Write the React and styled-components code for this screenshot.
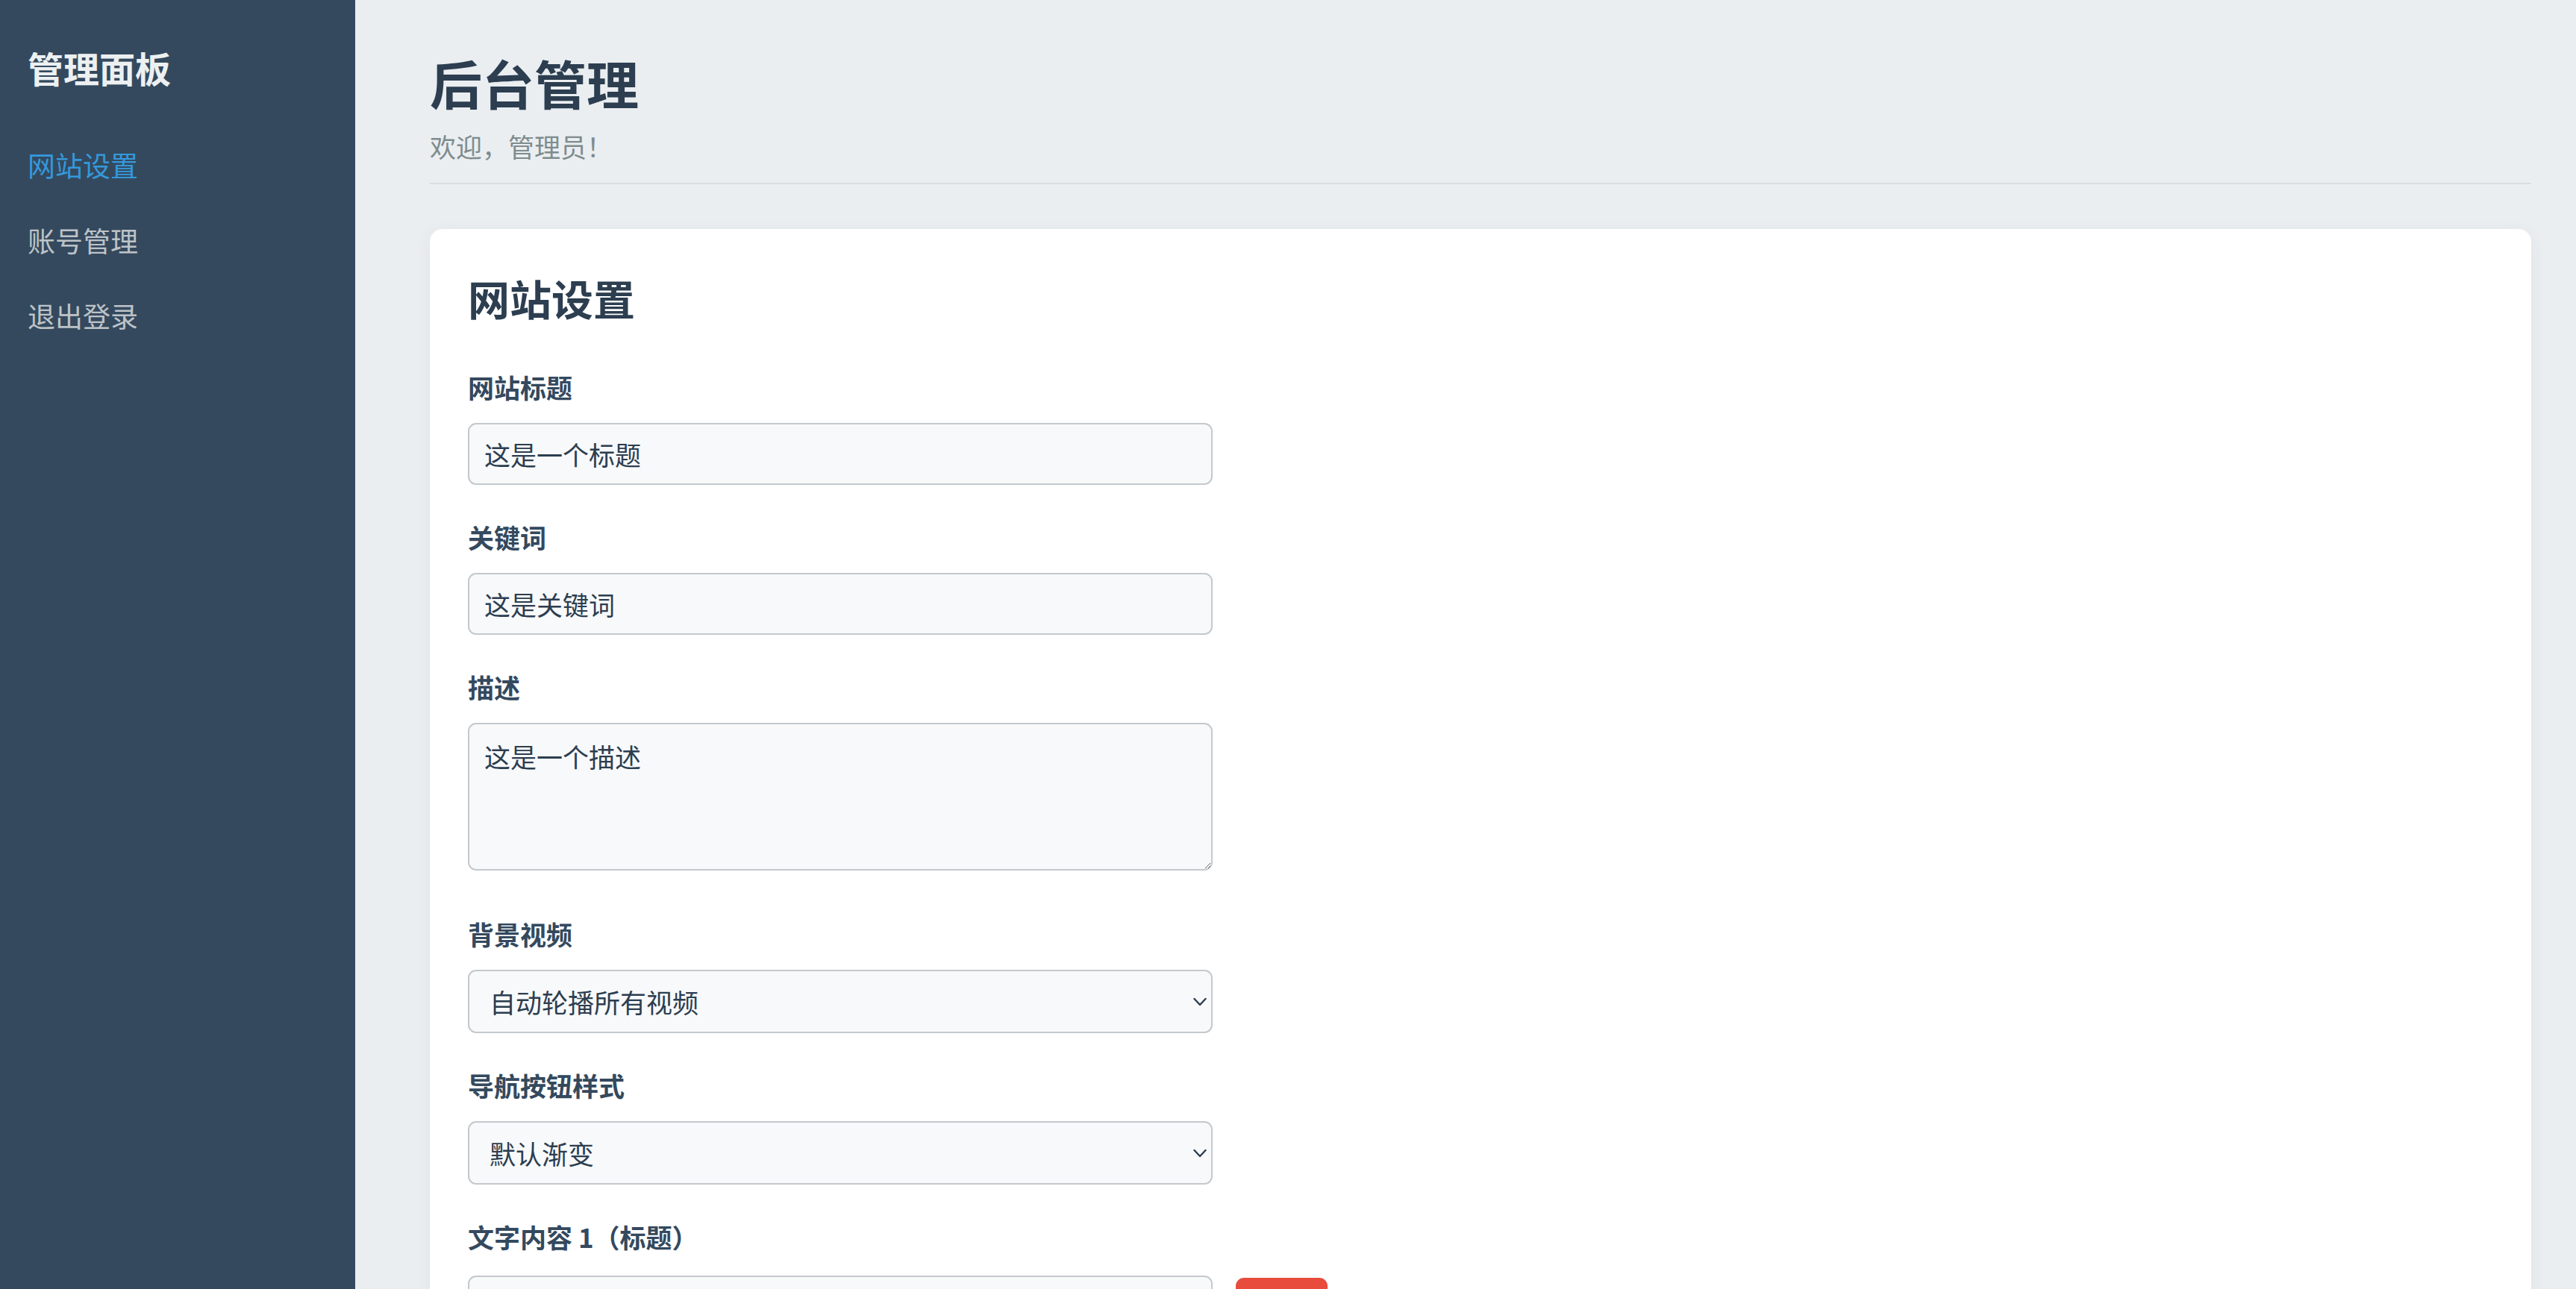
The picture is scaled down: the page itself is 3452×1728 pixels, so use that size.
import React from 'react'
import styled, { createGlobalStyle } from 'styled-components'

const GlobalStyle = createGlobalStyle`
  html, body {
    margin: 0;
    padding: 0;
    background: #eaeef1;
  }
  body {
    font-family: "Noto Sans CJK SC", "Noto Sans", sans-serif;
    color: #2c3e50;
  }
  * {
    box-sizing: border-box;
  }
`

const Shell = styled.div`
  display: flex;
  min-height: 100vh;
`

const Sidebar = styled.aside`
  width: 476px;
  flex-shrink: 0;
  background: #34495e;
  padding: 61px 37px;
`

const Brand = styled.h2`
  margin: 0 0 52px;
  font-size: 48px;
  line-height: 58px;
  font-weight: 700;
  color: #ecf0f1;
`

const NavList = styled.nav`
  display: flex;
  flex-direction: column;
`

const NavLink = styled.a`
  display: block;
  padding: 28px 0;
  font-size: 37px;
  line-height: 45px;
  text-decoration: none;
  color: ${p => (p.$active ? '#3498db' : '#bdc3c7')};
  cursor: pointer;
`

const Main = styled.main`
  flex: 1;
  padding: 68px 60px 120px 100px;
`

const Header = styled.header`
  padding-bottom: 28px;
  border-bottom: 2px solid #d8dde1;
`

const Title = styled.h1`
  margin: 0;
  font-size: 70px;
  line-height: 86px;
  font-weight: 700;
  color: #2c3e50;
`

const Welcome = styled.p`
  margin: 21px 0 0;
  font-size: 35px;
  line-height: 42px;
  color: #7f8c8d;
`

const Card = styled.section`
  margin-top: 60px;
  background: #fff;
  border-radius: 17px;
  padding: 58px 51px;
  box-shadow: 0 4px 22px rgba(44, 62, 80, 0.06);
`

const CardTitle = styled.h2`
  margin: 0 0 65px;
  font-size: 56px;
  line-height: 68px;
  font-weight: 700;
  color: #2c3e50;
`

const FormGroup = styled.div`
  margin-bottom: ${p => p.$gap || 49}px;
`

const Label = styled.label`
  display: block;
  margin-bottom: ${p => p.$gap || 27}px;
  font-size: 35px;
  line-height: 42px;
  font-weight: 700;
  color: #34495e;
`

const fieldBase = `
  display: block;
  width: 998px;
  font-family: "Noto Sans CJK SC", "Noto Sans", sans-serif;
  font-size: 35px;
  color: #2c3e50;
  background: #f8f9fa;
  border: 2px solid #c3c9cd;
  border-radius: 11px;
  outline: none;
`

const TextInput = styled.input`
  ${fieldBase}
  height: 83px;
  padding: 0 20px;
`

const TextArea = styled.textarea`
  ${fieldBase}
  height: 198px;
  padding: 18px 20px;
  line-height: 1.4;
  resize: vertical;
`

const SelectWrap = styled.div`
  position: relative;
  width: 998px;
`

const Select = styled.select`
  ${fieldBase}
  height: 85px;
  padding: 0 60px 0 27px;
  appearance: none;
  -webkit-appearance: none;
`

const Chevron = styled.svg`
  position: absolute;
  right: 8px;
  top: 50%;
  width: 18px;
  height: 12px;
  transform: translateY(-50%);
  pointer-events: none;
`

const Row = styled.div`
  display: flex;
  align-items: center;
  gap: 31px;
`

const DangerButton = styled.button`
  width: 123px;
  height: 77px;
  border: none;
  border-radius: 11px;
  background: #e74c3c;
  color: #fff;
  font-family: "Noto Sans CJK SC", "Noto Sans", sans-serif;
  font-size: 33px;
  cursor: pointer;
`

const PrimaryButton = styled.button`
  height: 83px;
  padding: 0 44px;
  border: none;
  border-radius: 11px;
  background: ${p => (p.$secondary ? '#95a5a6' : '#3498db')};
  color: #fff;
  font-family: "Noto Sans CJK SC", "Noto Sans", sans-serif;
  font-size: 35px;
  margin-right: 24px;
  cursor: pointer;
`

const navItems = [
  { label: '网站设置', active: true },
  { label: '账号管理' },
  { label: '退出登录' }
]

const SelectField = ({ label, options, value }) => (
  <FormGroup>
    <Label>{label}</Label>
    <SelectWrap>
      <Select defaultValue={value}>
        {options.map(o => (
          <option key={o} value={o}>{o}</option>
        ))}
      </Select>
      <Chevron viewBox="0 0 18 12">
        <path d="M1.5 2 L9 10 L16.5 2" fill="none" stroke="#2c3e50" strokeWidth="2.4" strokeLinecap="round" strokeLinejoin="round" />
      </Chevron>
    </SelectWrap>
  </FormGroup>
)

export default function App() {
  return (
    <Shell>
      <GlobalStyle />
      <Sidebar>
        <Brand>管理面板</Brand>
        <NavList>
          {navItems.map(item => (
            <NavLink key={item.label} $active={item.active}>{item.label}</NavLink>
          ))}
        </NavList>
      </Sidebar>
      <Main>
        <Header>
          <Title>后台管理</Title>
          <Welcome>欢迎，管理员！</Welcome>
        </Header>
        <Card>
          <CardTitle>网站设置</CardTitle>
          <FormGroup>
            <Label>网站标题</Label>
            <TextInput defaultValue="这是一个标题" />
          </FormGroup>
          <FormGroup>
            <Label>关键词</Label>
            <TextInput defaultValue="这是关键词" />
          </FormGroup>
          <FormGroup $gap={64}>
            <Label>描述</Label>
            <TextArea defaultValue="这是一个描述" />
          </FormGroup>
          <SelectField
            label="背景视频"
            value="自动轮播所有视频"
            options={['自动轮播所有视频', '视频 1', '视频 2']}
          />
          <SelectField
            label="导航按钮样式"
            value="默认渐变"
            options={['默认渐变', '纯色', '透明']}
          />
          <FormGroup>
            <Label $gap={31}>文字内容 1（标题）</Label>
            <Row>
              <TextInput defaultValue="欢迎来到我的网站" />
              <DangerButton>删除</DangerButton>
            </Row>
          </FormGroup>
          <FormGroup>
            <PrimaryButton $secondary>添加文字内容</PrimaryButton>
            <PrimaryButton>保存设置</PrimaryButton>
          </FormGroup>
        </Card>
      </Main>
    </Shell>
  )
}
